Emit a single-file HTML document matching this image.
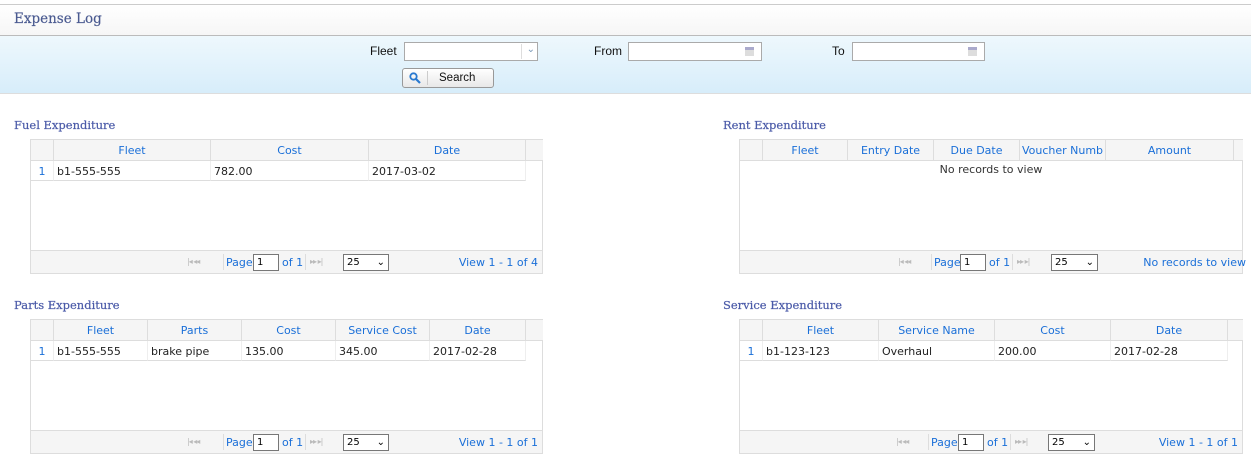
<!DOCTYPE html>
<html><head><meta charset="utf-8"><style>
*{box-sizing:border-box;margin:0;padding:0}
body{width:1251px;height:467px;background:#fff;position:relative;overflow:hidden;font-family:"DejaVu Sans","Liberation Sans",sans-serif;font-size:11px;color:#222}
.a{position:absolute}
.title{left:0;top:4px;width:1251px;height:32px;border-top:1px solid #ccc;border-bottom:1px solid #bbb;background:linear-gradient(#fff,#f6f6f6)}
.title span{position:absolute;left:14px;top:6px;font-family:"DejaVu Serif","Liberation Serif",serif;font-size:13.5px;color:#4a5a90;-webkit-text-stroke:0.2px #4a5a90}
.band{left:0;top:36px;width:1251px;height:58px;background:linear-gradient(#eef8fd,#d7edfa);border-bottom:1px solid #ddd}
.lbl{font-family:"Liberation Sans",sans-serif;font-size:12px;color:#111}
.inp{background:#fff;border:1px solid #aaa;height:19px}
.sec{font-family:"DejaVu Serif","Liberation Serif",serif;font-size:11.5px;color:#4a5aa8;-webkit-text-stroke:0.2px #4a5aa8}
.grid{border:1px solid #ddd;background:#fff}
.hd{position:absolute;top:0;height:21px;border-right:1px solid #ddd;border-bottom:1px solid #ddd;background:#f5f5f5;color:#1a6fd8;text-align:center;line-height:22px}
.cell{position:absolute;height:20px;line-height:21px;border-right:1px solid #eee;border-bottom:1px solid #ddd;padding-left:3px;white-space:nowrap}
.rn{color:#1a6fd8;text-align:center;padding:0;background:#fff}
.pg{position:absolute;left:0;right:0;bottom:0;height:23px;background:#f5f5f5;border-top:1px solid #ddd;color:#1a6fd8}
.pg .t{position:absolute;top:5px}
.pg .box{position:absolute;top:3px;height:17px;border:1px solid #777;background:#fff;color:#000;font-size:10px;padding-left:3px;line-height:15px}
.ic{position:absolute;top:6px;color:#bbb;font-size:8px;letter-spacing:-1px}
.sep{position:absolute;top:3px;height:16px;border-left:1px solid #ddd}
</style></head><body>
<div class="a title"><span>Expense Log</span></div>
<div class="a band"></div>
<div class="a lbl" style="left:370px;top:44px">Fleet</div>
<div class="a inp" style="left:404px;top:42px;width:134px"><span style="position:absolute;right:2px;top:1px;color:#7a9ab8;font-size:10px">&#8964;</span><span style="position:absolute;right:15px;top:1px;bottom:1px;border-left:1px solid #ddd"></span></div>
<div class="a lbl" style="left:594px;top:44px">From</div>
<div class="a inp" style="left:628px;top:42px;width:134px"><span style="position:absolute;right:7px;top:4px;width:9px;height:9px;background:linear-gradient(#aac 0 3px,#ddd 3px)"></span></div>
<div class="a lbl" style="left:832px;top:44px">To</div>
<div class="a inp" style="left:852px;top:42px;width:133px"><span style="position:absolute;right:7px;top:4px;width:9px;height:9px;background:linear-gradient(#aac 0 3px,#ddd 3px)"></span></div>
<div class="a" style="left:402px;top:68px;width:92px;height:20px;border:1px solid #999;border-radius:3px;background:linear-gradient(#fff,#e8e8e8)">
<svg class="a" style="left:6px;top:3px" width="12" height="12" viewBox="0 0 12 12"><circle cx="4.5" cy="4.5" r="3.2" fill="none" stroke="#2a7ad0" stroke-width="1.8"/><path d="M7 7l4 4" stroke="#2a7ad0" stroke-width="2.2"/></svg>
<span class="a" style="left:24px;top:2px;bottom:2px;border-left:1px solid #ccc"></span>
<span class="a lbl" style="left:36px;top:3px;font-size:11.5px">Search</span></div>

<div class="a sec" style="left:14px;top:118px">Fuel Expenditure</div>
<div class="a sec" style="left:723px;top:118px">Rent Expenditure</div>
<div class="a sec" style="left:14px;top:298px">Parts Expenditure</div>
<div class="a sec" style="left:723px;top:298px">Service Expenditure</div>

<!-- Fuel -->
<div class="a grid" style="left:30px;top:139px;width:513px;height:135px">
<div class="hd" style="left:0;width:23px"></div><div class="hd" style="left:23px;width:157px">Fleet</div><div class="hd" style="left:180px;width:158px">Cost</div><div class="hd" style="left:338px;width:157px">Date</div><div class="hd" style="left:495px;width:17px;border-right:0"></div>
<div class="cell rn" style="left:0;top:21px;width:23px">1</div><div class="cell" style="left:23px;top:21px;width:157px">b1-555-555</div><div class="cell" style="left:180px;top:21px;width:158px">782.00</div><div class="cell" style="left:338px;top:21px;width:157px">2017-03-02</div>
<div class="pg"><span class="ic" style="left:156px">|◂&nbsp;◂◂</span><span class="sep" style="left:192px"></span><span class="t" style="left:195px">Page</span><span class="box" style="left:222px;width:26px">1</span><span class="t" style="left:251px">of 1</span><span class="sep" style="left:274px"></span><span class="ic" style="left:279px">▸▸&nbsp;▸|</span><span class="box" style="left:312px;width:46px">25<span style="position:absolute;right:3px;top:0">&#8964;</span></span><span class="t" style="right:4px">View 1 - 1 of 4</span></div>
</div>

<!-- Rent -->
<div class="a grid" style="left:739px;top:139px;width:504px;height:135px">
<div class="hd" style="left:0;width:23px"></div><div class="hd" style="left:23px;width:85px">Fleet</div><div class="hd" style="left:108px;width:86px">Entry Date</div><div class="hd" style="left:194px;width:86px">Due Date</div><div class="hd" style="left:280px;width:86px;overflow:hidden;white-space:nowrap">Voucher Numb</div><div class="hd" style="left:366px;width:128px">Amount</div><div class="hd" style="left:494px;width:9px;border-right:0"></div>
<div class="a" style="left:0;right:0;top:22px;text-align:center;line-height:16px;color:#333">No records to view</div>
<div class="pg"><span class="ic" style="left:158px">|◂&nbsp;◂◂</span><span class="sep" style="left:191px"></span><span class="t" style="left:194px">Page</span><span class="box" style="left:220px;width:26px">1</span><span class="t" style="left:249px">of 1</span><span class="sep" style="left:272px"></span><span class="ic" style="left:277px">▸▸&nbsp;▸|</span><span class="box" style="left:311px;width:47px">25<span style="position:absolute;right:3px;top:0">&#8964;</span></span><span class="t" style="right:-4px">No records to view</span></div>
</div>

<!-- Parts -->
<div class="a grid" style="left:30px;top:319px;width:513px;height:135px">
<div class="hd" style="left:0;width:23px"></div><div class="hd" style="left:23px;width:94px">Fleet</div><div class="hd" style="left:117px;width:94px">Parts</div><div class="hd" style="left:211px;width:94px">Cost</div><div class="hd" style="left:305px;width:94px">Service Cost</div><div class="hd" style="left:399px;width:96px">Date</div><div class="hd" style="left:495px;width:17px;border-right:0"></div>
<div class="cell rn" style="left:0;top:21px;width:23px">1</div><div class="cell" style="left:23px;top:21px;width:94px">b1-555-555</div><div class="cell" style="left:117px;top:21px;width:94px">brake pipe</div><div class="cell" style="left:211px;top:21px;width:94px">135.00</div><div class="cell" style="left:305px;top:21px;width:94px">345.00</div><div class="cell" style="left:399px;top:21px;width:96px">2017-02-28</div>
<div class="pg"><span class="ic" style="left:156px">|◂&nbsp;◂◂</span><span class="sep" style="left:192px"></span><span class="t" style="left:195px">Page</span><span class="box" style="left:222px;width:26px">1</span><span class="t" style="left:251px">of 1</span><span class="sep" style="left:274px"></span><span class="ic" style="left:279px">▸▸&nbsp;▸|</span><span class="box" style="left:312px;width:46px">25<span style="position:absolute;right:3px;top:0">&#8964;</span></span><span class="t" style="right:4px">View 1 - 1 of 1</span></div>
</div>

<!-- Service -->
<div class="a grid" style="left:739px;top:319px;width:504px;height:135px">
<div class="hd" style="left:0;width:23px"></div><div class="hd" style="left:23px;width:116px">Fleet</div><div class="hd" style="left:139px;width:116px">Service Name</div><div class="hd" style="left:255px;width:116px">Cost</div><div class="hd" style="left:371px;width:117px">Date</div><div class="hd" style="left:488px;width:15px;border-right:0"></div>
<div class="cell rn" style="left:0;top:21px;width:23px">1</div><div class="cell" style="left:23px;top:21px;width:116px">b1-123-123</div><div class="cell" style="left:139px;top:21px;width:116px">Overhaul</div><div class="cell" style="left:255px;top:21px;width:116px">200.00</div><div class="cell" style="left:371px;top:21px;width:117px">2017-02-28</div>
<div class="pg"><span class="ic" style="left:156px">|◂&nbsp;◂◂</span><span class="sep" style="left:188px"></span><span class="t" style="left:191px">Page</span><span class="box" style="left:218px;width:26px">1</span><span class="t" style="left:247px">of 1</span><span class="sep" style="left:270px"></span><span class="ic" style="left:275px">▸▸&nbsp;▸|</span><span class="box" style="left:308px;width:47px">25<span style="position:absolute;right:3px;top:0">&#8964;</span></span><span class="t" style="right:4px">View 1 - 1 of 1</span></div>
</div>
</body></html>
